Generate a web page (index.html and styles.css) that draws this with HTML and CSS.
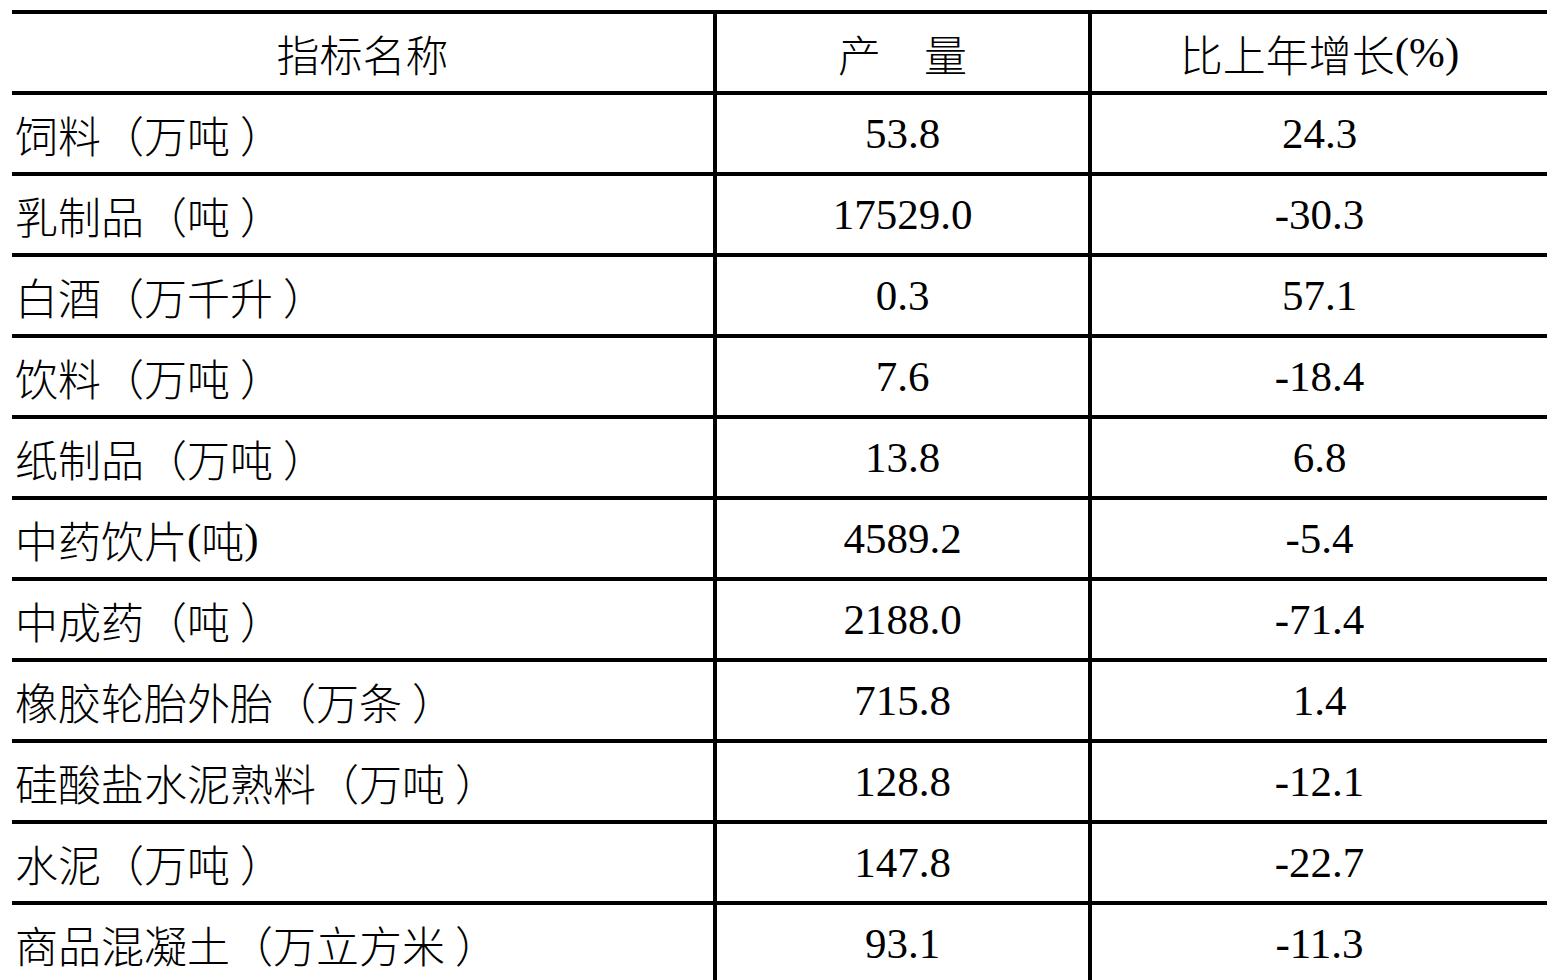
FILE: index.html
```html
<!DOCTYPE html>
<html lang="zh">
<head>
<meta charset="utf-8">
<title>主要工业产品产量</title>
<link rel="stylesheet" href="styles.css">
</head>
<body>
<div class="table">
  <div class="row head">
    <div class="cell c1 center cn">指标名称</div>
    <div class="cell c2 center cn">产　量</div>
    <div class="cell c3 center cn">比上年增长<span class="num">(%)</span></div>
  </div>
  <div class="row"><div class="cell c1 cn">饲料<span class="lp">（</span>万吨<span class="rp">）</span></div><div class="cell c2 center num">53.8</div><div class="cell c3 center num">24.3</div></div>
  <div class="row"><div class="cell c1 cn">乳制品<span class="lp">（</span>吨<span class="rp">）</span></div><div class="cell c2 center num">17529.0</div><div class="cell c3 center num">-30.3</div></div>
  <div class="row"><div class="cell c1 cn">白酒<span class="lp">（</span>万千升<span class="rp">）</span></div><div class="cell c2 center num">0.3</div><div class="cell c3 center num">57.1</div></div>
  <div class="row"><div class="cell c1 cn">饮料<span class="lp">（</span>万吨<span class="rp">）</span></div><div class="cell c2 center num">7.6</div><div class="cell c3 center num">-18.4</div></div>
  <div class="row"><div class="cell c1 cn">纸制品<span class="lp">（</span>万吨<span class="rp">）</span></div><div class="cell c2 center num">13.8</div><div class="cell c3 center num">6.8</div></div>
  <div class="row"><div class="cell c1 cn">中药饮片<span class="num">(</span>吨<span class="num">)</span></div><div class="cell c2 center num">4589.2</div><div class="cell c3 center num">-5.4</div></div>
  <div class="row"><div class="cell c1 cn">中成药<span class="lp">（</span>吨<span class="rp">）</span></div><div class="cell c2 center num">2188.0</div><div class="cell c3 center num">-71.4</div></div>
  <div class="row"><div class="cell c1 cn">橡胶轮胎外胎<span class="lp">（</span>万条<span class="rp">）</span></div><div class="cell c2 center num">715.8</div><div class="cell c3 center num">1.4</div></div>
  <div class="row"><div class="cell c1 cn">硅酸盐水泥熟料<span class="lp">（</span>万吨<span class="rp">）</span></div><div class="cell c2 center num">128.8</div><div class="cell c3 center num">-12.1</div></div>
  <div class="row"><div class="cell c1 cn">水泥<span class="lp">（</span>万吨<span class="rp">）</span></div><div class="cell c2 center num">147.8</div><div class="cell c3 center num">-22.7</div></div>
  <div class="row"><div class="cell c1 cn">商品混凝土<span class="lp">（</span>万立方米<span class="rp">）</span></div><div class="cell c2 center num">93.1</div><div class="cell c3 center num">-11.3</div></div>
</div>
</body>
</html>
```
FILE: styles.css
```css
html, body {
  overflow: hidden;
  height: 100%;
}
body {
  margin: 10px 0 0 12px;
  background: #fff;
  color: #000;
}
.table {
  width: 1535px;
}
.row {
  display: flex;
  height: 77px;
  border-top: 4px solid #000;
}
.cell {
  display: flex;
  align-items: center;
  white-space: nowrap;
}
.c1 {
  width: 701px;
  padding-left: 3px;
  box-sizing: border-box;
}
.c2 {
  width: 375px;
  border-left: 4px solid #000;
  box-sizing: border-box;
}
.c3 {
  width: 459px;
  border-left: 4px solid #000;
  box-sizing: border-box;
}
.center {
  justify-content: center;
  padding-left: 0;
}
.cn {
  font-family: "Noto Sans CJK SC", "Liberation Serif", serif;
  font-size: 43px;
  font-weight: 300;
}
.lp,
.rp {
  display: inline-block;
  width: 43px;
  box-sizing: border-box;
}
.lp {
  text-align: right;
  padding-right: 2px;
}
.rp {
  text-align: left;
  padding-left: 10px;
}
.num {
  font-family: "Liberation Serif", "Noto Sans CJK SC", serif;
  font-size: 43px;
  font-weight: 400;
}
```
